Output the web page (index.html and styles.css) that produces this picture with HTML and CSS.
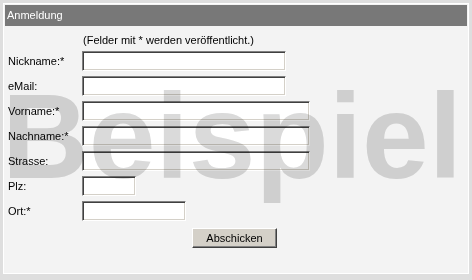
FILE: index.html
```html
<!DOCTYPE html>
<html lang="de">
<head>
    <meta charset="UTF-8">
    <title>Anmeldung</title>
    <link rel="stylesheet" href="styles.css">
</head>
<body>
    <div class="panel">
        <div class="panel-head">Anmeldung</div>
        <form class="signup" action="#" method="post">
            <p class="hint">(Felder mit * werden veröffentlicht.)</p>
            <div class="fields">
                <label for="nick">Nickname:*</label>
                <input type="text" id="nick" name="nick" class="mid">
                <label for="email">eMail:</label>
                <input type="text" id="email" name="email" class="mid">
                <label for="vorname">Vorname:*</label>
                <input type="text" id="vorname" name="vorname" class="long">
                <label for="nachname">Nachname:*</label>
                <input type="text" id="nachname" name="nachname" class="long">
                <label for="strasse">Strasse:</label>
                <input type="text" id="strasse" name="strasse" class="long">
                <label for="plz">Plz:</label>
                <input type="text" id="plz" name="plz" class="tiny">
                <label for="ort">Ort:*</label>
                <input type="text" id="ort" name="ort" class="short">
                <div class="actions">
                    <button type="submit">Abschicken</button>
                </div>
            </div>
        </form>
        <div class="watermark">Beispiel</div>
    </div>
</body>
</html>
```

FILE: styles.css
```css
body {
    margin: 0;
    padding: 3px;
    background: #dedede;
    font-family: "Liberation Sans", Arial, sans-serif;
    font-size: 11px;
    color: #000;
}
.panel {
    position: relative;
    height: 271px;
    box-sizing: border-box;
    padding: 1px;
    background: #f3f3f3;
    border: 1px solid #fff;
    overflow: hidden;
    isolation: isolate;
}
.panel-head {
    height: 21px;
    line-height: 21px;
    padding-left: 2px;
    background: #787878;
    color: #fff;
}
.signup {
    padding-left: 3px;
}
.hint {
    margin: 8px 0 4px 75px;
    line-height: 13px;
}
.fields {
    display: grid;
    grid-template-columns: 74px 1fr;
    grid-auto-rows: 20px;
    row-gap: 5px;
    align-items: center;
}
label {
    line-height: 13px;
}
input {
    height: 20px;
    box-sizing: border-box;
    margin: 0;
    padding: 1px 3px;
    font: inherit;
    background: #fff;
    border: 1px solid;
    border-color: #808080 #fff #fff #808080;
    box-shadow: inset 1px 1px #404040, inset -1px -1px #d4d0c8;
}
.mid { width: 204px; }
.long { width: 228px; }
.tiny { width: 54px; }
.short { width: 104px; }
.actions {
    grid-column: 2;
    margin-top: 3px;
    padding-left: 110px;
}
button {
    width: 85px;
    height: 20px;
    padding: 0;
    font: inherit;
    color: #000;
    background: #d4d0c8;
    border: 1px solid;
    border-color: #fff #404040 #404040 #fff;
    box-shadow: inset -1px -1px #808080;
}
.watermark {
    position: absolute;
    left: -2px;
    top: 72px;
    font-size: 120px;
    font-weight: bold;
    line-height: 1;
    color: #dadada;
    mix-blend-mode: multiply;
    pointer-events: none;
    white-space: nowrap;
}
```
